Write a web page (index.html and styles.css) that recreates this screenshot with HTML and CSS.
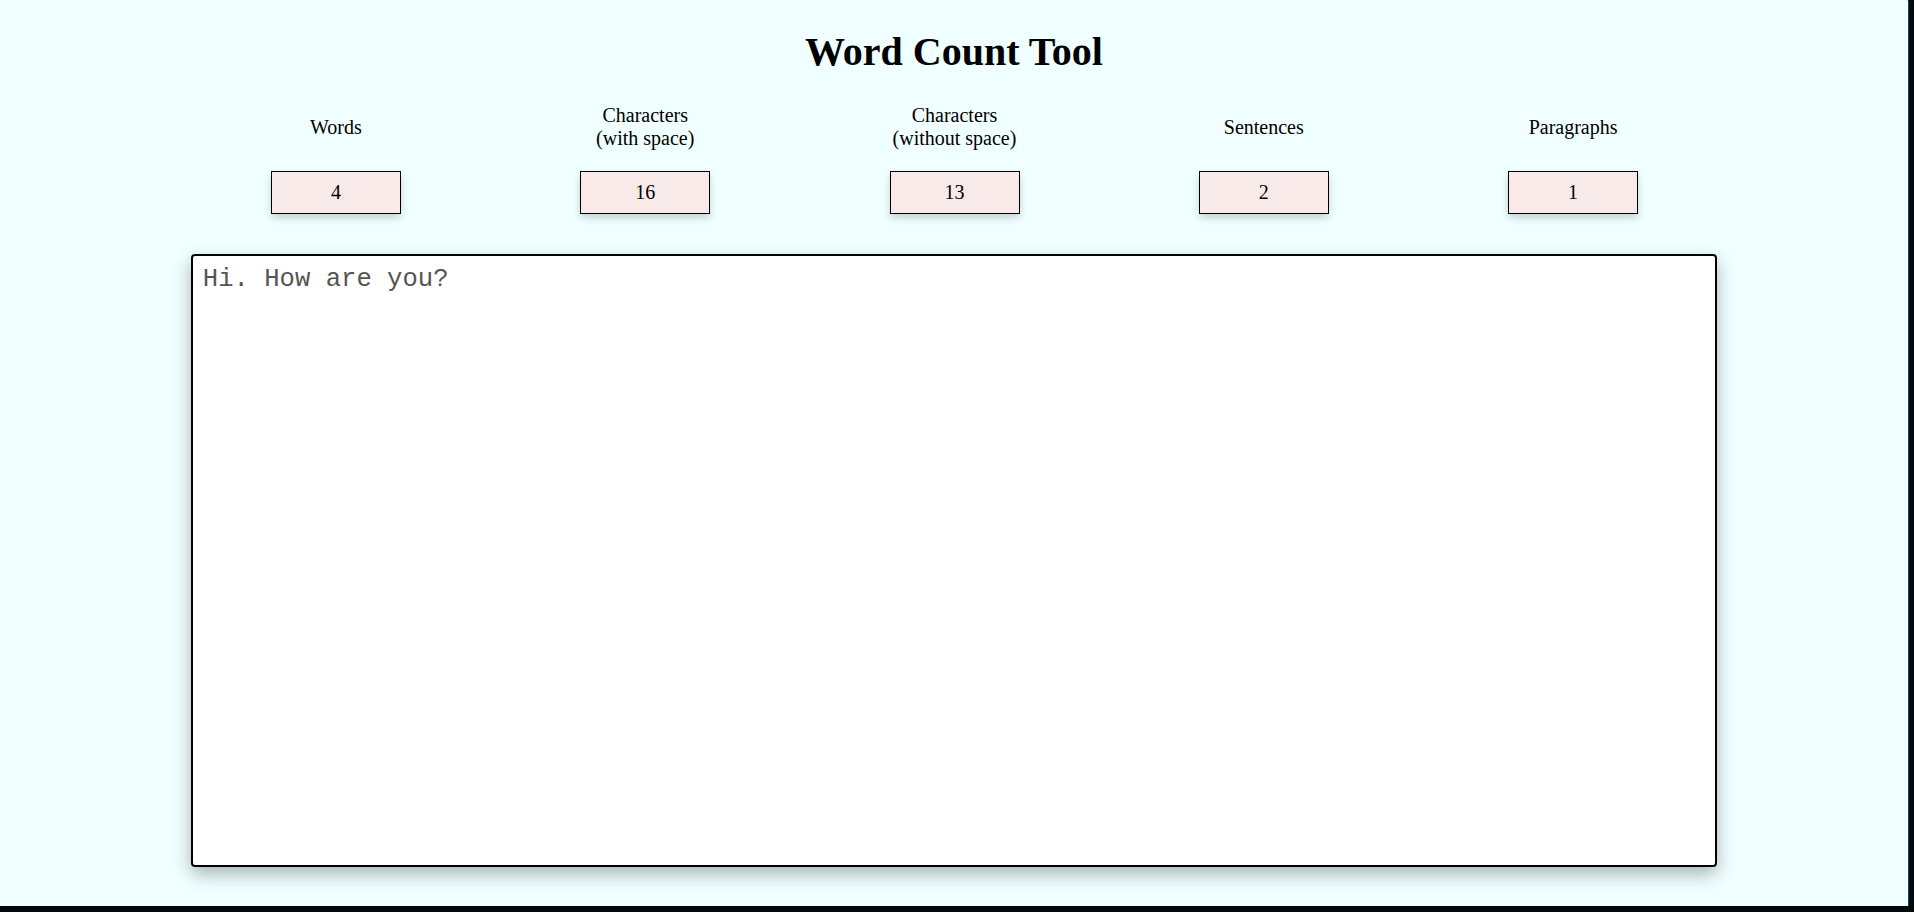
FILE: index.html
```html
<!DOCTYPE html>
<html lang="en">
<head>
<meta charset="utf-8">
<title>Word Count Tool</title>
<link rel="stylesheet" href="styles.css">
</head>
<body>
<div class="page">
  <h1 class="title">Word Count Tool</h1>
  <div class="stats">
    <div class="stat">
      <div class="stat-label">Words</div>
      <div class="stat-value">4</div>
    </div>
    <div class="stat">
      <div class="stat-label">Characters<br>(with space)</div>
      <div class="stat-value">16</div>
    </div>
    <div class="stat">
      <div class="stat-label">Characters<br>(without space)</div>
      <div class="stat-value">13</div>
    </div>
    <div class="stat">
      <div class="stat-label">Sentences</div>
      <div class="stat-value">2</div>
    </div>
    <div class="stat">
      <div class="stat-label">Paragraphs</div>
      <div class="stat-value">1</div>
    </div>
  </div>
  <textarea class="editor" id="editor" spellcheck="false">Hi. How are you?</textarea>
</div>
<script src="script.js"></script>
</body>
</html>
```
FILE: styles.css
```css
html, body {
  margin: 0;
  padding: 0;
  background: #02080c;
}

.page {
  width: 1908px;
  height: 906px;
  background: #f0ffff;
  box-shadow: 1px 1px 0 #0b4a6e;
  font-family: "Liberation Serif", "Times New Roman", serif;
  color: #000;
  display: flex;
  flex-direction: column;
  align-items: center;
  overflow: hidden;
}

.title {
  margin: 30px 0 0;
  font-size: 40px;
  font-weight: bold;
  line-height: 44px;
}

.stats {
  width: 80%;
  display: flex;
  gap: 20px;
  margin-top: 25px;
}

.stat {
  flex: 1;
  display: flex;
  flex-direction: column;
  align-items: center;
  padding-left: 1px;
}

.stat-label {
  height: 56px;
  display: flex;
  align-items: center;
  text-align: center;
  font-size: 20px;
  line-height: 23px;
}

.stat-value {
  margin-top: 16px;
  box-sizing: border-box;
  width: 130px;
  height: 43px;
  border: 1px solid #000;
  background: #f9eaea;
  font-size: 20px;
  line-height: 41px;
  text-align: center;
  box-shadow: 0 4px 8px rgba(0, 0, 0, 0.18);
}

.editor {
  box-sizing: border-box;
  width: 80%;
  height: 613px;
  margin-top: 40px;
  padding: 9px 10px;
  border: 2px solid #000;
  border-radius: 4px;
  background: #fff;
  font-family: "Liberation Mono", "Courier New", monospace;
  font-size: 25.6px;
  color: #555;
  caret-color: #000;
  resize: none;
  outline: none;
  box-shadow: 0 7px 18px rgba(0, 0, 0, 0.3);
}
```
FILE: script.js
```js
var ed = document.getElementById('editor');
ed.focus();
ed.setSelectionRange(ed.value.length, ed.value.length);
```
